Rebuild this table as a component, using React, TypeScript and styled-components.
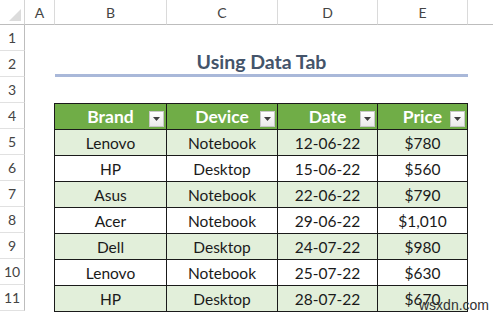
import styled, { createGlobalStyle } from "styled-components"

const GlobalStyle = createGlobalStyle`
  html, body {
    margin: 0;
    padding: 0;
    background: #ffffff;
  }
  body {
    font-family: Lato, "Open Sans", "Liberation Sans", sans-serif;
  }
`

interface Row {
  brand: string
  device: string
  date: string
  price: string
}

const rows: Row[] = [
  { brand: "Lenovo", device: "Notebook", date: "12-06-22", price: "$780" },
  { brand: "HP", device: "Desktop", date: "15-06-22", price: "$560" },
  { brand: "Asus", device: "Notebook", date: "22-06-22", price: "$790" },
  { brand: "Acer", device: "Notebook", date: "29-06-22", price: "$1,010" },
  { brand: "Dell", device: "Desktop", date: "24-07-22", price: "$980" },
  { brand: "Lenovo", device: "Notebook", date: "25-07-22", price: "$630" },
  { brand: "HP", device: "Desktop", date: "28-07-22", price: "$670" },
]

const columns = ["A", "B", "C", "D", "E", ""]
const headers = ["Brand", "Device", "Date", "Price"]
const widths = [112, 111, 100, 90]

const App = () => {
  return (
    <Page>
      <GlobalStyle />
      <Sheet>
        <Corner>
          <CornerMark />
        </Corner>
        {columns.map((c, i) => (
          <ColHead key={i} $last={i === columns.length - 1}>
            {c}
          </ColHead>
        ))}
        {Array.from({ length: 11 }, (_, i) => (
          <RowHead key={i} style={{ gridRow: i + 2 }}>
            {i + 1}
          </RowHead>
        ))}
        <Title>Using Data Tab</Title>
        <Table>
          <colgroup>
            {widths.map((w, i) => (
              <col key={i} style={{ width: w }} />
            ))}
          </colgroup>
          <thead>
            <tr>
              {headers.map((h) => (
                <Th key={h}>
                  {h}
                  <FilterButton>
                    <svg width="7" height="4" viewBox="0 0 7 4">
                      <path d="M0 0h7L3.5 4z" fill="#404040" />
                    </svg>
                  </FilterButton>
                </Th>
              ))}
            </tr>
          </thead>
          <tbody>
            {rows.map((r, i) => (
              <Tr key={i} $band={i % 2 === 0}>
                <Td>{r.brand}</Td>
                <Td>{r.device}</Td>
                <Td>{r.date}</Td>
                <Td>{r.price}</Td>
              </Tr>
            ))}
          </tbody>
        </Table>
        <Watermark>wsxdn.com</Watermark>
      </Sheet>
    </Page>
  )
}

export default App

const Page = styled.div`
  width: 493px;
  height: 316px;
  overflow: hidden;
  background: #ffffff;
`

const Sheet = styled.div`
  position: relative;
  display: grid;
  grid-template-columns: 25px 30px 112px 111px 100px 90px 1fr;
  grid-template-rows: 25px repeat(11, 26px) 1fr;
  height: 316px;
`

const Corner = styled.div`
  position: relative;
  grid-row: 1;
  grid-column: 1;
  border-right: 1px solid #d4d4d4;
  border-bottom: 1px solid #bdbdbd;
`

const CornerMark = styled.div`
  position: absolute;
  right: 3px;
  bottom: 3px;
  width: 12px;
  height: 12px;
  background: #dcdcdc;
  clip-path: polygon(100% 0, 100% 100%, 0 100%);
`

const ColHead = styled.div<{ $last?: boolean }>`
  grid-row: 1;
  display: flex;
  align-items: center;
  justify-content: center;
  border-right: ${(p) => (p.$last ? "none" : "1px solid #dadada")};
  border-bottom: 1px solid #bdbdbd;
  color: #444444;
  font-size: 14px;
`

const RowHead = styled.div`
  grid-column: 1;
  display: flex;
  align-items: center;
  justify-content: center;
  border-right: 1px solid #bdbdbd;
  border-bottom: 1px solid #e1e1e1;
  color: #444444;
  font-size: 14px;
`

const Title = styled.div`
  grid-row: 3;
  grid-column: 3 / 7;
  display: flex;
  align-items: flex-end;
  justify-content: center;
  padding-bottom: 1px;
  border-bottom: 3px solid #a9b8d9;
  color: #44546a;
  font-size: 19.5px;
  font-weight: 700;
  margin-top: -26px;
`

const Table = styled.table`
  grid-row: 5 / 13;
  grid-column: 3 / 7;
  border-collapse: collapse;
  width: 414px;
  table-layout: fixed;
  margin-left: -1px;
`

const Th = styled.th`
  position: relative;
  height: 26px;
  padding: 0;
  background: #70ad47;
  border: 1px solid #1a1a1a;
  color: #ffffff;
  font-size: 17.5px;
  font-weight: 700;
  text-align: center;
  box-sizing: border-box;
`

const FilterButton = styled.span`
  position: absolute;
  right: 2px;
  bottom: 2px;
  width: 15px;
  height: 16px;
  display: flex;
  align-items: center;
  justify-content: center;
  background: linear-gradient(#ffffff, #eaeaea);
  border: 1px solid #c8c8c8;
  box-sizing: border-box;
`

const Tr = styled.tr<{ $band: boolean }>`
  background: ${(p) => (p.$band ? "#e2efda" : "#ffffff")};
`

const Td = styled.td`
  height: 26px;
  padding: 0;
  border: 1px solid #1a1a1a;
  color: #1a1a1a;
  font-size: 15.5px;
  text-align: center;
  box-sizing: border-box;
`

const Watermark = styled.div`
  position: absolute;
  left: 419px;
  top: 297px;
  color: #333333;
  font-family: "Liberation Sans", sans-serif;
  font-size: 14px;
`
